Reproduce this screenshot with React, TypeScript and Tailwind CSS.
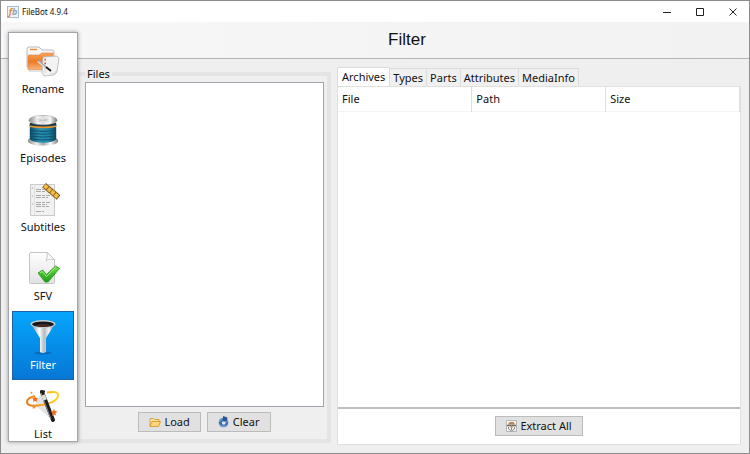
import { useState } from "react";
import type { ReactNode } from "react";

function RenameIcon() {
  return (
    <svg width="34" height="32" viewBox="0 0 34 32" aria-hidden="true">
      <defs>
        <linearGradient id="rn-front" x1="0" y1="0" x2="0" y2="1">
          <stop offset="0" stopColor="#f9a45c" />
          <stop offset="0.5" stopColor="#ee7a22" />
          <stop offset="1" stopColor="#f7b883" />
        </linearGradient>
        <linearGradient id="rn-back" x1="0" y1="0" x2="0" y2="1">
          <stop offset="0" stopColor="#ffffff" />
          <stop offset="1" stopColor="#dedede" />
        </linearGradient>
      </defs>
      <path d="M1 22V4q0-2 2-2h9q1 0 2 1l2 2h10q2 0 2 2v16z" fill="url(#rn-back)" stroke="#b9b9b9" />
      <path d="M4 4.500h7" stroke="#ee8a3c" strokeWidth="1.500" />
      <path d="M2 24V11q0-1 1-1h10l3-2h11v16q0 1-1 1H3q-1 0-1-1z" fill="url(#rn-front)" stroke="#d98545" strokeWidth="0.600" />
      <path d="M2 25h24v2H4q-2 0-2-2z" fill="#e3e3e3" />
      <path d="M17 12l14-1 2 2-2 14-3 3-10 1-2-3z" fill="#f3f3f3" stroke="#b5b5b5" strokeWidth="0.800" />
      <path d="M19 14v14M31 25l-3 4h-4" stroke="#cfcfcf" fill="none" />
      <path d="M18.500 14.500H20M18.500 18.500H20" stroke="#c0583e" strokeWidth="1.500" />
      <path d="M12 16l9 7" stroke="#dcdcdc" strokeWidth="2.500" />
      <path d="M12 15l8 7" stroke="#777" strokeWidth="0.800" />
      <path d="M20 22l5 4" stroke="#222" strokeWidth="2" />
    </svg>
  );
}

function EpisodesIcon() {
  return (
    <svg width="32" height="33" viewBox="0 0 34 34" aria-hidden="true">
      <defs>
        <linearGradient id="ep-metal" x1="0" x2="1">
          <stop offset="0" stopColor="#8b8b8b" />
          <stop offset="0.300" stopColor="#eeeeee" />
          <stop offset="0.500" stopColor="#a8a8a8" />
          <stop offset="0.750" stopColor="#fafafa" />
          <stop offset="1" stopColor="#777777" />
        </linearGradient>
        <linearGradient id="ep-blue" x1="0" x2="1">
          <stop offset="0" stopColor="#0e4b66" />
          <stop offset="0.350" stopColor="#2a8fb0" />
          <stop offset="0.700" stopColor="#2187ab" />
          <stop offset="1" stopColor="#0c4259" />
        </linearGradient>
      </defs>
      <path d="M1 28q0-3 4-3h24q4 0 4 3 0 5-16 5T1 28z" fill="url(#ep-metal)" />
      <path d="M3 9h28v17q-3 4-14 4T3 26z" fill="url(#ep-blue)" />
      <path d="M3 17q14 2 28 0M3 20q14 2 28 0M3 23q14 2 28 0M3 26q14 2 28 0" fill="none" stroke="#0d4f6b" strokeWidth="1" />
      <path d="M3 10.500q14 3 28 0" fill="none" stroke="#1b3644" strokeWidth="3" />
      <path d="M3 12.500q14 2.500 28 0" fill="none" stroke="#e5962c" strokeWidth="1.800" />
      <ellipse cx="17" cy="6" rx="15" ry="5" fill="url(#ep-metal)" stroke="#999" strokeWidth="0.500" />
      <path d="M17 6L8 2.500q8-2 16 0zM17 6l9 3.500q-8 2-16 0z" fill="#fff" opacity="0.600" />
    </svg>
  );
}

function SubtitlesIcon() {
  return (
    <svg width="34" height="34" viewBox="0 0 34 34" aria-hidden="true">
      <path d="M4.500 2.500h24v31h-24z" fill="#f1f1f1" stroke="#c9c9c9" />
      <path d="M8.500 2v31" stroke="#e0e0e0" />
      <g fill="#bbb">
        <circle cx="6.500" cy="6" r="0.800" />
        <circle cx="6.500" cy="14" r="0.800" />
        <circle cx="6.500" cy="22" r="0.800" />
      </g>
      <g stroke="#aaaaaa" strokeWidth="1" strokeDasharray="5 1 3 1">
        <path d="M10 7.500h8M10 9.500h9M10 13.500h14M10 15.500h12M10 20.500h14M10 22.500h11M10 24.500h13M10 29.500h8" />
      </g>
      <g transform="translate(20 1) rotate(40)">
        <path d="M0 0h19v6H0z" fill="#6b5220" />
        <path d="M.5 1h3.800v4H.5zM5 1h3.800v4H5zM9.500 1h3.800v4H9.500zM14 1h4v4h-4z" fill="#f5bb42" />
        <path d="M1 0h18M1 6h18" stroke="#ead9ae" strokeWidth="0.800" strokeDasharray="1 1" />
      </g>
    </svg>
  );
}

function SfvIcon() {
  return (
    <svg width="34" height="34" viewBox="0 0 34 34" aria-hidden="true">
      <defs>
        <linearGradient id="sfv-page" x1="0" y1="0" x2="0" y2="1">
          <stop offset="0" stopColor="#ffffff" />
          <stop offset="1" stopColor="#e2e2e2" />
        </linearGradient>
        <linearGradient id="sfv-check" x1="0" y1="0" x2="0" y2="1">
          <stop offset="0" stopColor="#7fe052" />
          <stop offset="0.500" stopColor="#3fbd2b" />
          <stop offset="1" stopColor="#1f9c1b" />
        </linearGradient>
      </defs>
      <path d="M3.500 3q0-1.500 1.500-1.500h16l7.500 7v23q0 1-1 1h-23q-1 0-1-1z" fill="url(#sfv-page)" stroke="#c4c4c4" />
      <path d="M21 1.500q1 5-1 8 4-2 8.500-1z" fill="#fff" stroke="#bdbdbd" strokeWidth="0.800" />
      <path d="M12 22l4.500-3 4 4.500 9-8.500 4 2.500L22 31h-3z" fill="url(#sfv-check)" stroke="#269620" strokeWidth="0.800" strokeLinejoin="round" />
      <path d="M14 22l2-1.500 4.500 5 9-9" fill="none" stroke="#baf39b" strokeWidth="1" opacity="0.800" />
    </svg>
  );
}

function FilterIcon() {
  return (
    <svg width="34" height="36" viewBox="0 0 34 36" aria-hidden="true">
      <defs>
        <linearGradient id="fl-metal" x1="0" x2="1">
          <stop offset="0" stopColor="#7d8a93" />
          <stop offset="0.350" stopColor="#ffffff" />
          <stop offset="0.550" stopColor="#b3bbc1" />
          <stop offset="0.750" stopColor="#f3f5f6" />
          <stop offset="1" stopColor="#5e6b75" />
        </linearGradient>
      </defs>
      <ellipse cx="17" cy="34" rx="9" ry="1.500" fill="#075ca5" opacity="0.600" />
      <path d="M5 5l9 14v14q3 2 6 0V19l9-14z" fill="url(#fl-metal)" />
      <ellipse cx="17" cy="5" rx="12.500" ry="4" fill="#c8cdd1" />
      <ellipse cx="17" cy="5.200" rx="11" ry="2.800" fill="#15191c" />
      <path d="M9 6.500q8 2.500 16 0-8-3-16 0z" fill="#4d2b25" />
    </svg>
  );
}

function ListIcon() {
  return (
    <svg width="34" height="34" viewBox="0 0 34 34" aria-hidden="true">
      <defs>
        <linearGradient id="ls-ring" x1="0" x2="1">
          <stop offset="0" stopColor="#f07a1d" />
          <stop offset="1" stopColor="#ffd21f" />
        </linearGradient>
      </defs>
      <path d="M9 16l6-12 11 27z" fill="#bbb" opacity="0.400" />
      <path d="M21 3.500q11-2 11 2.500 0 7-16 10Q1 18.500 1 13 1 9 9 7" fill="none" stroke="url(#ls-ring)" strokeWidth="2" />
      <path d="M16 3l11 28" stroke="#1c1c1c" strokeWidth="4" strokeLinecap="round" />
      <path d="M15 4l10 26" stroke="#8b8b8b" strokeWidth="1" />
      <path d="M17 6l2 5" stroke="#ddd" strokeWidth="4" />
      <path d="M14 2.500h5" stroke="#222" strokeWidth="2" />
      <path d="M9 7.500l1.200 1.500 2 .5-1.500 1.500.3 2-2-1-1.800 1 .3-2L6 9.500 8 9zM28 20l1 2 2.500.5-2 1.500.5 2.500L28 25.500 26 27l.5-3-2-1.500 2.500-.5z" fill="#f2691f" />
      <path d="M8 15l.7 1.500 1.600.2-1.200 1.200.3 1.800L8 19l-1.500.7.3-1.800-1.200-1.200 1.700-.2zM5 2.500l1.500 1L6 5 4.500 4z" fill="#f28a3f" />
    </svg>
  );
}

function AppLogo() {
  return (
    <span className="flex h-3 w-3 items-center justify-center border border-[#a9bccb] bg-[#f1f4f6] text-[9px] leading-none font-bold italic" aria-hidden="true">
      <span className="text-[#ec8434]">f</span>
      <span className="text-[#8aa4b8]">b</span>
    </span>
  );
}

function FolderIcon() {
  return (
    <svg width="12" height="12" viewBox="0 0 12 12" aria-hidden="true">
      <path d="M1 10V2.500h3.500l1 1H10V6" fill="#fbe3a0" stroke="#d6a23c" />
      <path d="M1 10.500L3 5.500h8.500L9.500 10.500z" fill="#fdd878" stroke="#d9a03a" strokeLinejoin="round" />
    </svg>
  );
}

function ClearIcon() {
  return (
    <svg width="12" height="12" viewBox="0 0 12 12" aria-hidden="true">
      <circle cx="5.500" cy="6.500" r="4.800" fill="#3f72b3" />
      <path d="M1.500 6a4 4 0 0 1 3-3.500M2 8.500a4 4 0 0 0 6 1" fill="none" stroke="#86b2e0" />
      <path d="M4.500 5.500a1.800 1.800 0 1 0 3 1L11 4.500 8 5z" fill="#dce6f1" />
      <path d="M5 0l4.500 1.500L8.500 6 5 5z" fill="#2c5795" />
    </svg>
  );
}

function ExtractIcon() {
  return (
    <svg width="11" height="12" viewBox="0 0 11 12" aria-hidden="true">
      <path d="M.5.5h10v11H.5z" fill="#f4f4f4" stroke="#b4b4b4" />
      <path d="M3.500 2h4l1.500 2.500H2z" fill="#b98050" />
      <path d="M1 5.500h9" stroke="#6b6b6b" strokeWidth="1.500" />
      <path d="M2.500 7v2l3 2 3-2V7M5.500 5v5" fill="none" stroke="#8a8a8a" />
      <path d="M4.500 6h2v2h-2z" fill="#d88a4c" />
    </svg>
  );
}

const panels: { name: string; icon: ReactNode }[] = [
  { name: "Rename", icon: <RenameIcon /> },
  { name: "Episodes", icon: <EpisodesIcon /> },
  { name: "Subtitles", icon: <SubtitlesIcon /> },
  { name: "SFV", icon: <SfvIcon /> },
  { name: "Filter", icon: <FilterIcon /> },
  { name: "List", icon: <ListIcon /> },
];

const tabs = ["Archives", "Types", "Parts", "Attributes", "MediaInfo"];

function PushButton({ icon, children }: { icon: ReactNode; children: ReactNode }) {
  return (
    <button type="button" className="flex h-5 items-center gap-[3px] border border-[#bcbcbc] bg-[#e1e1e1] px-[10px] whitespace-nowrap">
      {icon}
      {children}
    </button>
  );
}

function Sidebar({ active, onSelect }: { active: string; onSelect: (name: string) => void }) {
  return (
    <nav className="absolute top-[31px] bottom-[11px] left-[7px] w-[70px] overflow-hidden border border-[#a3a5ab] bg-white px-[3px] pt-0.5 shadow-[0_0_4px_rgba(0,0,0,0.35)]">
      {panels.map(({ name, icon }) => (
        <button
          key={name}
          type="button"
          onClick={() => onSelect(name)}
          className={
            name === active
              ? "flex h-[69px] w-full flex-col items-center justify-end border border-[#1c62a8] bg-linear-to-b from-[#06a5fb] to-[#0877d6] pb-[7px] text-white"
              : "flex h-[69px] w-full flex-col items-center justify-end border border-transparent pb-[7px]"
          }
        >
          <span className="flex h-9 items-center">{icon}</span>
          <span className="mt-[3px] leading-[14px]">{name}</span>
        </button>
      ))}
    </nav>
  );
}

export default function App() {
  const [active, setActive] = useState("Filter");
  const [tab, setTab] = useState("Archives");

  return (
    <div className="relative flex h-screen flex-col border border-[#8c8c8c] bg-[#efefef] font-['Noto_Sans','Open_Sans',sans-serif] text-[11px] leading-4 text-[#111]">
      <div className="flex h-[21px] shrink-0 items-center bg-white pl-[6px]">
        <AppLogo />
        <span className="ml-[3px] text-[8px]">FileBot 4.9.4</span>
        <div className="ml-auto flex h-full text-[#222]">
          <button type="button" aria-label="Minimize" className="flex w-8 items-center justify-center">
            <svg width="8" height="8" viewBox="0 0 8 8"><path d="M0 4.500h8" stroke="currentColor" /></svg>
          </button>
          <button type="button" aria-label="Maximize" className="flex w-[33px] items-center justify-center">
            <svg width="8" height="8" viewBox="0 0 8 8"><path d="M.5.5h7v7h-7z" fill="none" stroke="currentColor" /></svg>
          </button>
          <button type="button" aria-label="Close" className="flex w-[33px] items-center justify-center">
            <svg width="8" height="8" viewBox="0 0 8 8"><path d="M.5.5l7 7M7.500.5l-7 7" stroke="currentColor" /></svg>
          </button>
        </div>
      </div>

      <header className="flex h-[37px] shrink-0 items-center justify-center border-b border-[#b4b4b4] bg-linear-to-r from-[#f7f7f7] to-[#f2f2f2] pl-16">
        <h1 className="font-['Liberation_Sans',Arial,sans-serif] text-[17px]">{active}</h1>
      </header>

      <main className="flex min-h-0 flex-1 gap-[6px] pr-2 pl-[75px]">
        <fieldset className="mt-[7px] mb-[10px] flex min-w-0 flex-[239] flex-col border-4 border-[#e4e4e4] pr-[3px] pb-[7px] pl-[5px]">
          <legend className="px-0.5">Files</legend>
          <div role="listbox" aria-label="Files" className="min-h-0 flex-1 border border-[#a0a4ac] bg-white" />
          <div className="mt-[5px] flex justify-center gap-[6px]">
            <PushButton icon={<FolderIcon />}>Load</PushButton>
            <PushButton icon={<ClearIcon />}>Clear</PushButton>
          </div>
        </fieldset>

        <section className="mt-2 mb-2 flex min-w-0 flex-[404] flex-col">
          <div role="tablist" className="flex h-[19px] shrink-0 items-end">
            {tabs.map((name) => (
              <button
                key={name}
                type="button"
                role="tab"
                aria-selected={name === tab}
                onClick={() => setTab(name)}
                className={
                  name === tab
                    ? "h-[19px] border border-b-0 border-[#dcdcdc] bg-white px-1"
                    : "h-[18px] border border-b-0 border-l-0 border-[#dcdcdc] bg-[#f0f0f0] px-[3px]"
                }
              >
                {name}
              </button>
            ))}
          </div>
          <div role="tabpanel" aria-label={tab} className="flex min-h-0 flex-1 flex-col border border-[#e0e0e0] bg-white">
            <div className="min-h-0 flex-1 border-b-2 border-[#bdbdbd]">
              <table className="w-full table-fixed border-collapse text-left">
                <thead>
                  <tr className="h-6 border-b border-[#f3f3f3]">
                    <th scope="col" className="border-r border-[#dedede] px-1 font-normal">File</th>
                    <th scope="col" className="border-r border-[#dedede] px-1 font-normal">Path</th>
                    <th scope="col" className="border-r border-[#dedede] px-1 font-normal">Size</th>
                  </tr>
                </thead>
              </table>
            </div>
            <div className="flex shrink-0 justify-center pt-[7px] pb-2">
              <PushButton icon={<ExtractIcon />}>Extract All</PushButton>
            </div>
          </div>
        </section>
      </main>

      <Sidebar active={active} onSelect={setActive} />
    </div>
  );
}
